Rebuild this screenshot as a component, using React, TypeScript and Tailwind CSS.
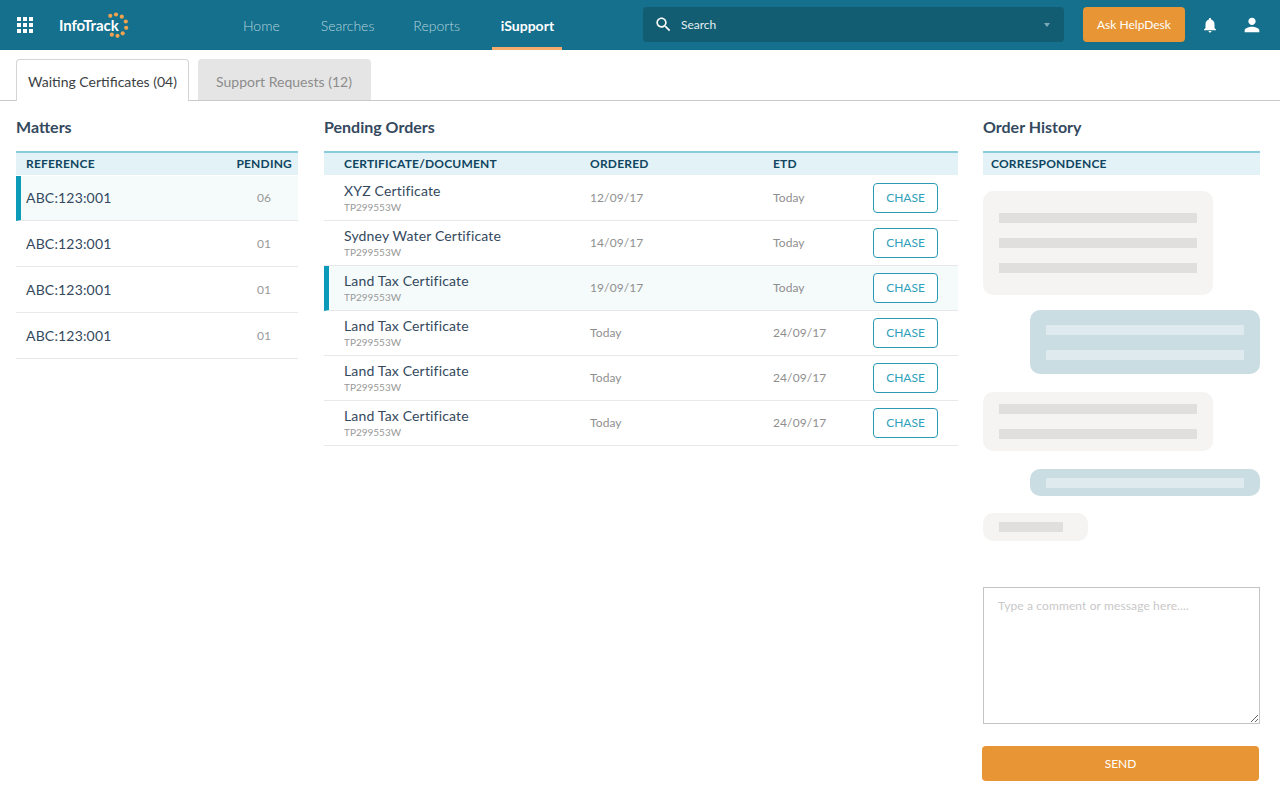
const pending = [
  { name: "XYZ Certificate", ordered: "12/09/17", etd: "Today" },
  { name: "Sydney Water Certificate", ordered: "14/09/17", etd: "Today" },
  { name: "Land Tax Certificate", ordered: "19/09/17", etd: "Today", active: true },
  { name: "Land Tax Certificate", ordered: "Today", etd: "24/09/17" },
  { name: "Land Tax Certificate", ordered: "Today", etd: "24/09/17" },
  { name: "Land Tax Certificate", ordered: "Today", etd: "24/09/17" },
];

const matters = [
  { count: "06", active: true },
  { count: "01" },
  { count: "01" },
  { count: "01" },
];

function Logo() {
  const dots: [number, number][] = [
    [3.3, 3.8], [9, 2.5], [14.8, 4.7], [18.8, 9.5], [19.2, 15.8], [15.7, 21.3], [10.5, 23.8], [4.8, 22.7],
  ];
  return (
    <div className="relative flex h-[36px] w-[72px] items-center">
      <span className="text-[15px] font-bold tracking-[-0.1px] text-white">InfoTrack</span>
      <svg className="absolute left-[48px] top-[5px]" width="32" height="30" viewBox="0 0 32 30">
        {dots.map(([x, y], i) => (
          <circle key={i} cx={x} cy={y} r={2.1} fill="#f0a24f" />
        ))}
      </svg>
    </div>
  );
}

function Bar({ light, w = "w-[198px]" }: { light?: boolean; w?: string }) {
  return <div className={`h-[10px] ${w} ${light ? "bg-[#deeaee]" : "bg-[#e0dfdd]"}`} />;
}

export default function App() {
  return (
    <div className="flex h-[800px] w-[1280px] flex-col overflow-hidden bg-white font-['Lato','Liberation_Sans',sans-serif] text-[#34495e]">
      <header className="flex h-[50px] shrink-0 items-center bg-[#14708c]">
        <div className="ml-[17px] grid w-[16px] grid-cols-3 gap-[2px]">
          {Array.from({ length: 9 }).map((_, i) => (
            <div key={i} className="h-[4px] w-[4px] bg-white" />
          ))}
        </div>
        <div className="ml-[26px]">
          <Logo />
        </div>
        <nav className="ml-[112px] flex h-full items-center text-[14px] font-light text-[#b4d4dd]">
          <a className="mr-[41px]">Home</a>
          <a className="mr-[39px]">Searches</a>
          <a className="mr-[32px]">Reports</a>
          <a className="flex h-full w-[70px] items-center justify-center border-b-[3px] border-[#f5ab6b] pl-px pt-[3px] font-bold text-white">
            iSupport
          </a>
        </nav>
        <div className="mb-px ml-[81px] flex h-[35px] w-[421px] items-center rounded-[4px] bg-[#125d72] pl-[11px] pr-[14px]">
          <svg width="19" height="19" viewBox="0 0 24 24" fill="white">
            <path d="M15.5 14h-.79l-.28-.27C15.41 12.59 16 11.11 16 9.5 16 5.91 13.09 3 9.5 3S3 5.91 3 9.5 5.91 16 9.5 16c1.61 0 3.09-.59 4.23-1.57l.27.28v.79l5 4.99L20.49 19l-4.99-5zm-6 0C7.01 14 5 11.99 5 9.5S7.01 5 9.5 5 14 7.01 14 9.5 11.99 14 9.5 14z" />
          </svg>
          <span className="ml-[8px] flex-1 text-[12px] text-[#e3eef1]">Search</span>
          <div className="h-0 w-0 border-x-[3.5px] border-t-[4px] border-x-transparent border-t-[#7fa9b6]" />
        </div>
        <button className="mb-px ml-[19px] h-[35px] w-[102px] rounded-[4px] bg-[#e89535] text-[12px] text-white">
          Ask HelpDesk
        </button>
        <svg className="ml-[16px]" width="18" height="18" viewBox="0 0 24 24" fill="white">
          <path d="M12 22c1.1 0 2-.9 2-2h-4c0 1.1.89 2 2 2zm6-6v-5c0-3.07-1.64-5.64-4.5-6.32V4c0-.83-.67-1.5-1.5-1.5s-1.5.67-1.5 1.5v.68C7.63 5.36 6 7.92 6 11v5l-2 2v1h16v-1l-2-2z" />
        </svg>
        <svg className="ml-[22px]" width="22" height="22" viewBox="0 0 24 24" fill="white">
          <path d="M12 12c2.21 0 4-1.79 4-4s-1.79-4-4-4-4 1.79-4 4 1.79 4 4 4zm0 2c-2.67 0-8 1.34-8 4v2h16v-2c0-2.66-5.33-4-8-4z" />
        </svg>
      </header>

      <div className="flex h-[51px] shrink-0 items-end gap-[9px] border-b border-[#c9c9c9] px-4">
        <div className="relative top-px flex h-[42px] w-[173px] items-center justify-center rounded-t-[4px] border border-b-0 border-[#d4d4d4] bg-white pt-[2px] text-[14px] text-[#3c3f44]">
          Waiting Certificates (04)
        </div>
        <div className="flex h-[41px] w-[173px] items-center justify-center rounded-t-[4px] bg-[#e5e5e5] pr-px pt-[4px] text-[14px] text-[#8c8c8c]">
          Support Requests (12)
        </div>
      </div>

      <main className="flex flex-1 gap-[26px] px-4">
        <section className="w-[282px]">
          <h2 className="mt-[16px] h-[20px] text-[16px] font-bold leading-[20px]">Matters</h2>
          <div className="mt-[14px] flex h-[24px] items-center justify-between border-t-2 border-[#8accdc] bg-[#e3f2f6] pl-[10px] pr-[6px] text-[12px] font-bold tracking-[0.2px] text-[#0f4560]">
            <span>REFERENCE</span>
            <span>PENDING</span>
          </div>
          {matters.map((m, i) => (
            <div
              key={i}
              className={`flex items-center border-b border-[#e8e8e8] ${
                m.active ? "mt-px h-[45px] border-l-[5px] border-l-[#0c9ab9] bg-[#f5fafb] pb-px pl-[5px]" : "h-[46px] pl-[10px]"
              }`}
            >
              <span className="flex-1 text-[14px] tracking-[0.17px]">ABC:123:001</span>
              <span className="mr-[27px] text-[12px] text-[#999999]">{m.count}</span>
            </div>
          ))}
        </section>

        <section className="w-[634px]">
          <h2 className="mt-[16px] h-[20px] text-[16px] font-bold leading-[20px]">Pending Orders</h2>
          <div className="mb-px mt-[14px] flex h-[24px] items-center border-t-2 border-[#8accdc] bg-[#e3f2f6] pl-[20px] text-[12px] font-bold tracking-[0.2px] text-[#0f4560]">
            <span className="w-[246px]">CERTIFICATE/DOCUMENT</span>
            <span className="w-[183px]">ORDERED</span>
            <span>ETD</span>
          </div>
          {pending.map((p, i) => (
            <div
              key={i}
              className={`flex h-[45px] items-center border-b border-[#e8e8e8] ${
                p.active ? "border-l-[5px] border-l-[#0c9ab9] bg-[#f5fafb] pl-[15px]" : "pl-[20px]"
              }`}
            >
              <div className="flex w-[246px] flex-col gap-[2px]">
                <div className="text-[14px] leading-[16px] tracking-[0.17px]">{p.name}</div>
                <div className="text-[10px] leading-[12px] text-[#999999]">TP299553W</div>
              </div>
              <span className="w-[183px] text-[12px] tracking-[0.1px] text-[#8f8f8f]">{p.ordered}</span>
              <span className="w-[100px] text-[12px] tracking-[0.1px] text-[#8f8f8f]">{p.etd}</span>
              <button className="h-[30px] w-[65px] rounded-[4px] border border-[#2a9ab5] bg-white text-[12px] text-[#2f9fba]">
                CHASE
              </button>
            </div>
          ))}
        </section>

        <section className="-ml-px flex w-[277px] flex-col">
          <h2 className="mt-[16px] h-[20px] text-[16px] font-bold leading-[20px]">Order History</h2>
          <div className="mt-[14px] flex h-[24px] items-center border-t-2 border-[#8accdc] bg-[#e3f2f6] pl-[8px] text-[12px] font-bold tracking-[0.2px] text-[#0f4560]">
            CORRESPONDENCE
          </div>

          <div className="mt-[16px] flex w-[230px] flex-col gap-[15px] rounded-[10px] bg-[#f5f4f3] px-[16px] py-[22px]">
            <Bar />
            <Bar />
            <Bar />
          </div>
          <div className="mt-[15px] flex w-[230px] flex-col gap-[15px] self-end rounded-[10px] bg-[#c9dde3] px-[16px] py-[14.5px]">
            <Bar light />
            <Bar light />
          </div>
          <div className="mt-[18px] flex w-[230px] flex-col gap-[15px] rounded-[10px] bg-[#f5f4f3] px-[16px] py-[12px]">
            <Bar />
            <Bar />
          </div>
          <div className="mt-[18px] w-[230px] self-end rounded-[10px] bg-[#c9dde3] px-[16px] py-[8.5px]">
            <Bar light />
          </div>
          <div className="mt-[17px] w-[105px] rounded-[10px] bg-[#f5f4f3] px-[16px] py-[9px]">
            <Bar w="w-[64px]" />
          </div>

          <textarea
            placeholder="Type a comment or message here...."
            className="mt-[46px] h-[137px] w-[277px] border border-[#c4c4c4] px-[14px] py-[9px] text-[12px] tracking-[0.12px] outline-none placeholder:text-[#c8c8c8]"
          />
          <button className="-ml-px mt-[22px] h-[35px] w-[277px] rounded-[4px] bg-[#e89535] text-[12px] text-white">
            SEND
          </button>
        </section>
      </main>
    </div>
  );
}
